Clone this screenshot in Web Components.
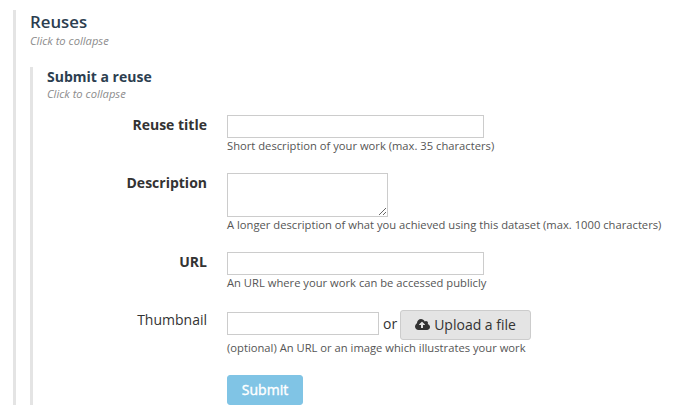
<!DOCTYPE html>
<html lang="en">
<head>
<meta charset="utf-8">
<title>Reuses</title>
<style>
  body { margin: 0; background: #fff; color: #333; font: 14px/20px "Open Sans", sans-serif; }
  .page { padding: 10px 0 0 13px; }
</style>
</head>
<body>
<div class="page">
  <collapse-section level="1" heading="Reuses">
    <collapse-section level="2" heading="Submit a reuse">
      <reuse-form></reuse-form>
    </collapse-section>
  </collapse-section>
</div>
<script>
class CollapseSection extends HTMLElement {
  connectedCallback() {
    const root = this.attachShadow({ mode: 'open' });
    root.innerHTML = `
      <style>
        :host { display: block; border-left: 3px solid #e4e4e4; padding-left: 14px; }
        :host([level="1"]) { height: 395px; box-sizing: border-box; }
        :host([level="2"]) { height: 338px; box-sizing: border-box; }
        h2 { margin: 0; color: #2c3e50; font-weight: 600; font-size: 16.8px; line-height: 24px; }
        :host([level="2"]) h2 { font-weight: 700; font-size: 14px; line-height: 20px; }
        p { margin: 0; color: #8c8c8c; font-style: italic; font-size: 11.2px; line-height: 14px; }
        .body { padding-top: 19px; }
        :host([level="2"]) .body { padding-top: 14px; }
      </style>
      <h2></h2>
      <p>Click to collapse</p>
      <div class="body"><slot></slot></div>`;
    root.querySelector('h2').textContent = this.getAttribute('heading');
  }
}
customElements.define('collapse-section', CollapseSection);

class FormRow extends HTMLElement {
  connectedCallback() {
    this.attachShadow({ mode: 'open' }).innerHTML = `
      <style>
        :host { display: grid; grid-template-columns: 160px 1fr; column-gap: 20px; align-items: start; }
        label { text-align: right; font-weight: 700; line-height: 20px; }
        :host([optional]) label { font-weight: 400; }
        .control { display: flex; align-items: center; }
        .hint { font-size: 11.2px; letter-spacing: 0.01px; line-height: 16px; color: #555; white-space: nowrap; }
      </style>
      <label></label>
      <div>
        <div class="control"><slot></slot></div>
        <div class="hint"></div>
      </div>`;
    this.shadowRoot.querySelector('label').textContent = this.getAttribute('label') || '';
    this.shadowRoot.querySelector('.hint').textContent = this.getAttribute('hint') || '';
  }
}
customElements.define('form-row', FormRow);

class UiButton extends HTMLElement {
  connectedCallback() {
    this.attachShadow({ mode: 'open' }).innerHTML = `
      <style>
        :host { display: inline-block; }
        button { display: flex; align-items: center; gap: 4px; box-sizing: border-box; height: 30px; width: 131px;
          margin: 0; padding: 0 14px; border: 1px solid #ccc; border-radius: 3px; background: #e4e4e4;
          color: #333; font: inherit; white-space: nowrap; }
        :host([primary]) button { width: 76px; justify-content: center; border-color: #80c4e5; background: #80c4e5; color: #fff; font-weight: 400; -webkit-text-stroke: 0.4px #fff; }
      </style>
      <button type="button"><slot name="icon"></slot><span><slot></slot></span></button>`;
  }
}
customElements.define('ui-button', UiButton);

class CloudUploadIcon extends HTMLElement {
  connectedCallback() {
    this.attachShadow({ mode: 'open' }).innerHTML = `
      <style>:host { display: block; width: 15px; height: 14px; } svg { display: block; }</style>
      <svg width="15" height="14" viewBox="0 0 1920 1792"><path fill="#333" d="M1280 864q0-14-9-23L919 489q-9-9-23-9t-23 9L522 840q-10 12-10 24 0 14 9 23t23 9h224v352q0 13 9.500 22.500t22.500 9.500h192q13 0 22.500-9.500t9.500-22.500V896h224q13 0 22.500-9.500t9.500-22.500zm640 288q0 159-112.500 271.500T1536 1536H448q-185 0-316.500-131.500T0 1088q0-130 70-240t188-165q-2-30-2-43 0-212 150-362t362-150q156 0 285.500 87T1242 446q71-62 166-62 106 0 181 75t75 181q0 76-41 138 130 31 213.500 135.500T1920 1152z"/></svg>`;
  }
}
customElements.define('cloud-upload-icon', CloudUploadIcon);

class ReuseForm extends HTMLElement {
  connectedCallback() {
    this.attachShadow({ mode: 'open' }).innerHTML = `
      <style>
        :host { display: flex; flex-direction: column; }
        input, textarea { display: block; box-sizing: border-box; margin: 0; padding: 2px; border: 1px solid #ccc;
          border-radius: 0; background: #fff; font: inherit; }
        input { width: 257px; height: 23px; }
        textarea { width: 161px; height: 44px; }
        input.short { width: 152px; align-self: flex-start; margin-top: 2px; }
        .or { margin: 0 3px 2px 4px; }
        .title { height: 58px; }
        .description { height: 79px; }
        .url { height: 58px; }
        .thumbnail { height: 65px; }
      </style>
      <form-row class="title" label="Reuse title" hint="Short description of your work (max. 35 characters)"><input type="text"></form-row>
      <form-row class="description" label="Description" hint="A longer description of what you achieved using this dataset (max. 1000 characters)"><textarea></textarea></form-row>
      <form-row class="url" label="URL" hint="An URL where your work can be accessed publicly"><input type="text"></form-row>
      <form-row class="thumbnail" optional label="Thumbnail" hint="(optional) An URL or an image which illustrates your work">
        <input class="short" type="text"><span class="or">or</span><ui-button><cloud-upload-icon slot="icon"></cloud-upload-icon>Upload a file</ui-button>
      </form-row>
      <form-row><ui-button primary>Submit</ui-button></form-row>`;
  }
}
customElements.define('reuse-form', ReuseForm);
</script>
</body>
</html>
